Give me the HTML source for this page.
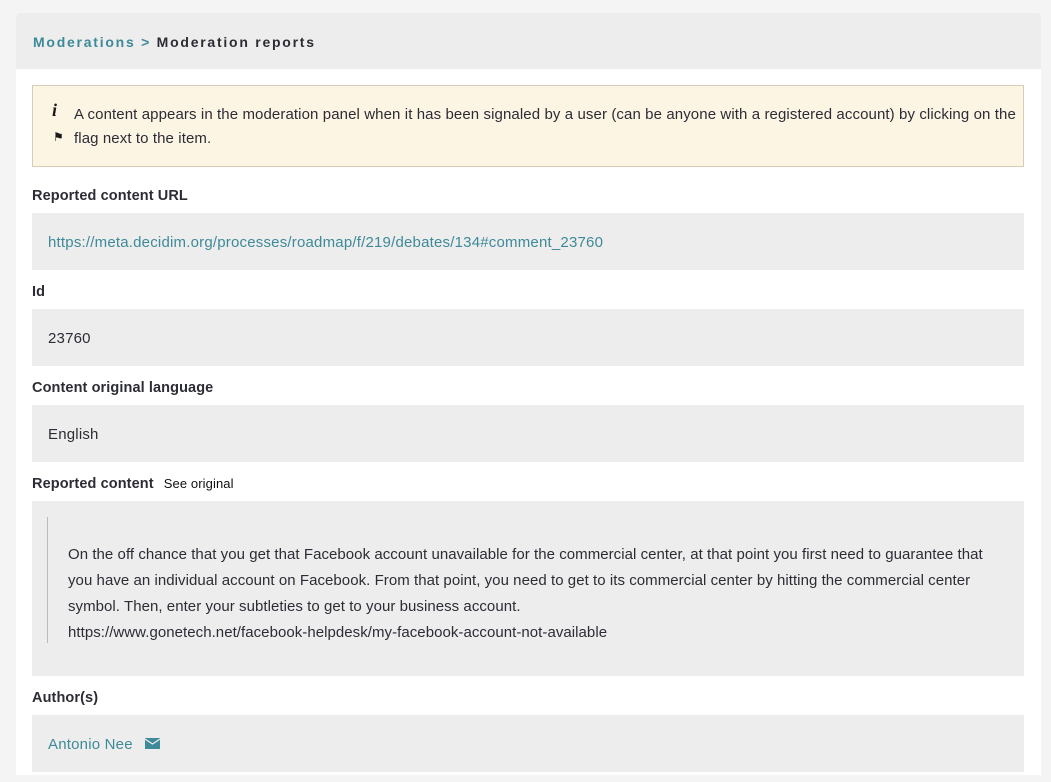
<!DOCTYPE html>
<html><head><style>
body{margin:0;background:#f4f4f4;font-family:"Liberation Sans",sans-serif;color:#1a1a1a;width:1051px;height:782px;overflow:hidden;position:relative}
.panel{position:absolute;left:16px;top:13px;width:1025px;height:762px;background:#fff;border-radius:4px 4px 0 0;overflow:hidden}
.head{height:56px;background:#ededed;}
.crumb{position:absolute;left:17px;top:21px;font-size:14px;font-weight:bold;letter-spacing:1.75px;color:#2c2c35}
.crumb span{color:#3e8a99}
.callout{position:absolute;left:16px;top:72px;width:992px;height:82px;background:#fdf5e4;border:1px solid #d8ccb6;box-sizing:border-box}
.callout p{margin:0;position:absolute;left:41px;top:17px;width:945px;font-size:15px;line-height:24px;color:#2c2c35;letter-spacing:0.1px}
.lbl{position:absolute;left:16px;font-size:14.5px;font-weight:bold;color:#2c2c35;letter-spacing:0.1px}
.box{position:absolute;left:16px;width:992px;background:#ededed;font-size:15px;color:#2c2c35;letter-spacing:0.2px}
.box .t{position:absolute;left:16px;top:21px}
a{color:#3e8a99;text-decoration:none}
</style></head><body>
<div class="panel">
<div class="head"></div>
<div class="crumb"><span>Moderations &gt;</span> Moderation reports</div>
<div class="callout">
<span style="position:absolute;left:19px;top:14px;font-style:italic;font-weight:bold;font-family:'Liberation Serif',serif;font-size:18px">i</span>
<span style="position:absolute;left:20px;top:44px;font-size:12px">&#9873;</span>
<p>A content appears in the moderation panel when it has been signaled by a user (can be anyone with a registered account) by clicking on the flag next to the item.</p>
</div>
<div class="lbl" style="top:175px">Reported content URL</div>
<div class="box" style="top:200px;height:57px"><div class="t"><a>https://meta.decidim.org/processes/roadmap/f/219/debates/134#comment_23760</a></div></div>
<div class="lbl" style="top:271px">Id</div>
<div class="box" style="top:296px;height:57px"><div class="t">23760</div></div>
<div class="lbl" style="top:367px">Content original language</div>
<div class="box" style="top:392px;height:57px"><div class="t">English</div></div>
<div class="lbl" style="top:463px">Reported content <span style="font-weight:normal;font-size:13px;color:#111;margin-left:6px">See original</span></div>
<div class="box" style="top:488px;height:175px">
<div style="position:absolute;left:15px;top:16px;height:126px;border-left:1px solid #bbb;padding-left:20px;width:955px;font-size:15px;line-height:26px;padding-top:25px;box-sizing:border-box;letter-spacing:0.05px">On the off chance that you get that Facebook account unavailable for the commercial center, at that point you first need to guarantee that you have an individual account on Facebook. From that point, you need to get to its commercial center by hitting the commercial center symbol. Then, enter your subtleties to get to your business account.<br>https://www.gonetech.net/facebook-helpdesk/my-facebook-account-not-available</div>
</div>
<div class="lbl" style="top:677px">Author(s)</div>
<div class="box" style="top:702px;height:57px"><div class="t"><a>Antonio Nee</a>
<svg width="15" height="11" viewBox="0 0 15 11" style="margin-left:8px;vertical-align:0"><rect width="15" height="11" fill="#3e8a99"/><path d="M0 1 L7.5 6 L15 1" stroke="#ededed" stroke-width="1.3" fill="none"/></svg></div></div>
</div>
</body></html>
